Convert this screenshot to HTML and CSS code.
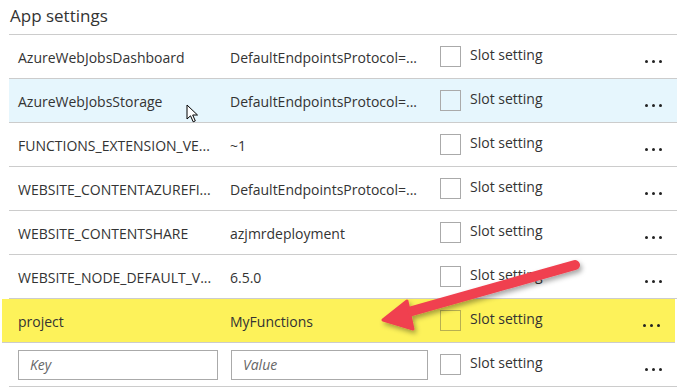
FILE: index.html
```html
<!DOCTYPE html>
<html lang="en">
<head>
    <meta charset="UTF-8">
    <meta name="viewport" content="width=device-width, initial-scale=1.0">
    <title>App settings</title>
    <link rel="stylesheet" href="styles.css">
</head>
<body>
    <div class="page">
        <h1 class="title">App settings</h1>
        <div class="settings">
            <div class="row">
                <div class="key">AzureWebJobsDashboard</div>
                <div class="value">DefaultEndpointsProtocol=...</div>
                <div class="slot"><span class="box"></span><span class="label">Slot setting</span></div>
                <div class="more"><i></i><i></i><i></i></div>
            </div>
            <div class="row hover">
                <div class="key">AzureWebJobsStorage</div>
                <div class="value">DefaultEndpointsProtocol=...</div>
                <div class="slot"><span class="box"></span><span class="label">Slot setting</span></div>
                <div class="more"><i></i><i></i><i></i></div>
            </div>
            <div class="row">
                <div class="key">FUNCTIONS_EXTENSION_VE...</div>
                <div class="value">~1</div>
                <div class="slot"><span class="box"></span><span class="label">Slot setting</span></div>
                <div class="more"><i></i><i></i><i></i></div>
            </div>
            <div class="row">
                <div class="key">WEBSITE_CONTENTAZUREFI...</div>
                <div class="value">DefaultEndpointsProtocol=...</div>
                <div class="slot"><span class="box"></span><span class="label">Slot setting</span></div>
                <div class="more"><i></i><i></i><i></i></div>
            </div>
            <div class="row">
                <div class="key">WEBSITE_CONTENTSHARE</div>
                <div class="value">azjmrdeployment</div>
                <div class="slot"><span class="box"></span><span class="label">Slot setting</span></div>
                <div class="more"><i></i><i></i><i></i></div>
            </div>
            <div class="row">
                <div class="key">WEBSITE_NODE_DEFAULT_V...</div>
                <div class="value">6.5.0</div>
                <div class="slot"><span class="box"></span><span class="label">Slot setting</span></div>
                <div class="more"><i></i><i></i><i></i></div>
            </div>
            <div class="row marked">
                <div class="key">project</div>
                <div class="value">MyFunctions</div>
                <div class="slot"><span class="box"></span><span class="label">Slot setting</span></div>
                <div class="more"><i></i><i></i><i></i></div>
            </div>
            <div class="row new">
                <div class="key"><input class="field key-field" placeholder="Key"></div>
                <div class="value"><input class="field value-field" placeholder="Value"></div>
                <div class="slot"><span class="box"></span><span class="label">Slot setting</span></div>
                <div class="more"><i></i><i></i><i></i></div>
            </div>
        </div>

        <!-- mouse cursor -->
        <svg class="cursor" width="14" height="20" viewBox="0 0 14 20">
            <path d="M1 1 L1 15 L4.5 11.8 L7.2 17.8 L9.3 16.9 L6.7 11 L11.5 11 Z" fill="#fff" stroke="#000" stroke-width="1" stroke-linejoin="round"/>
        </svg>

        <!-- annotation arrow -->
        <svg class="arrow" width="683" height="391" viewBox="0 0 683 391">
            <defs>
                <filter id="shadow" x="-10%" y="-30%" width="130%" height="180%">
                    <feDropShadow dx="2" dy="3" stdDeviation="2.5" flood-color="#000" flood-opacity="0.35"/>
                </filter>
            </defs>
            <g filter="url(#shadow)">
                <path d="M575 265 L405 313" stroke="#f0404f" stroke-width="10" stroke-linecap="round"/>
                <path d="M383 320 L407 301 L413 329 Z" fill="#f0404f" stroke="#f0404f" stroke-width="3" stroke-linejoin="round"/>
            </g>
        </svg>
    </div>
</body>
</html>
```

FILE: styles.css
```css
body {
    margin: 0;
    background-color: #fff;
    font-family: "Segoe UI", "Open Sans", sans-serif;
    color: #333;
}
.page {
    position: relative;
    width: 683px;
    height: 391px;
    overflow: hidden;
}
.title {
    margin: 0;
    padding: 5px 0 0 10px;
    height: 29px;
    font-size: 17px;
    font-weight: 400;
    line-height: 22px;
    color: #333;
}
.settings {
    margin: 0 6px 0 9px;
    border-top: 1px solid #ccc;
}
.row {
    display: grid;
    grid-template-columns: 212px 210px 1fr 32px;
    align-items: center;
    height: 43px;
    padding-left: 9px;
    border-bottom: 1px solid #ccc;
    font-size: 14px;
}
.row.hover {
    background-color: #e6f6fd;
}
.row.marked {
    background-color: #fdf25a;
    margin-left: -7px;
    padding-left: 16px;
    margin-right: 2px;
}
.key, .value {
    white-space: nowrap;
    padding-top: 2px;
}
.slot {
    display: flex;
    align-items: center;
    gap: 9px;
}
.box {
    width: 19px;
    height: 19px;
    border: 1px solid #aaa;
    background-color: transparent;
}
.marked .box {
    border-color: #b8b050;
}
.label {
    font-size: 14px;
    margin-top: -5px;
}
.more {
    display: flex;
    gap: 4px;
    padding-top: 10px;
}
.more i {
    width: 3px;
    height: 3px;
    border-radius: 50%;
    background-color: #222;
}
.new .key, .new .value {
    padding-top: 0;
}
.field {
    display: block;
    box-sizing: border-box;
    height: 30px;
    border: 1px solid #aaa;
    padding: 0 11px;
    font-family: "Segoe UI", "Open Sans", sans-serif;
    font-size: 14px;
    color: #333;
    outline: none;
}
.field::placeholder {
    color: #666;
    font-style: italic;
}
.key-field {
    width: 200px;
}
.value-field {
    width: 197px;
    margin-left: 1px;
}
.cursor {
    position: absolute;
    left: 186px;
    top: 104px;
}
.arrow {
    position: absolute;
    left: 0;
    top: 0;
}
```
